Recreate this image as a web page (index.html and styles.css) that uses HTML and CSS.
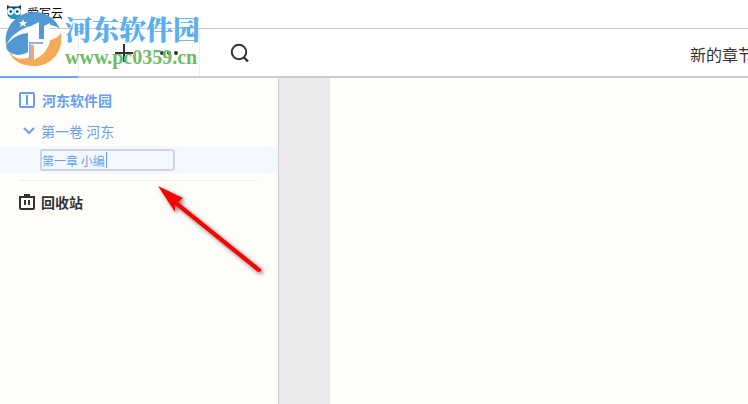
FILE: index.html
```html
<!DOCTYPE html>
<html lang="zh-CN">
<head>
<meta charset="utf-8">
<title>爱写云</title>
<link rel="stylesheet" href="styles.css">
</head>
<body>
<div class="app">
  <header class="titlebar">
    <svg class="owl" viewBox="0 0 16 16" aria-hidden="true">
      <path d="M1 1 4 2.500h8L15 1v6c0 5-3 8-7 8S1 12 1 7z" fill="#123f52"/>
      <path d="M2 4c2-1 4 0 6 1 2-1 4-2 6-1v5c0 3-3 6-6 6s-6-3-6-6z" fill="#199bc2"/>
      <circle cx="4.500" cy="7.500" r="3.400" fill="#e8fbff"/><circle cx="11.500" cy="7.500" r="3.400" fill="#e8fbff"/>
      <circle cx="4.800" cy="7.500" r="1.300" fill="#123f52"/><circle cx="11.200" cy="7.500" r="1.300" fill="#123f52"/>
    </svg>
    <span>爱写云</span>
  </header>
  <div class="toolbar">
    <div class="tab">
      <button class="tool" aria-label="目录"><svg width="12" height="20" viewBox="0 0 12 20"><path d="M3 1v18M3 4h8M3 16h8" fill="none" stroke="#6a9ff0" stroke-width="2"/></svg></button>
    </div>
    <div class="actions">
      <button class="tool" aria-label="新建"><svg width="18" height="18" viewBox="0 0 18 18"><path d="M9 0v18M0 9h18" stroke="#333" stroke-width="2"/></svg></button>
      <button class="tool" aria-label="更多"><svg width="18" height="18" viewBox="0 0 18 18" fill="#333"><circle cx="2" cy="9" r="2"/><circle cx="9" cy="9" r="2"/><circle cx="16" cy="9" r="2"/></svg></button>
    </div>
    <button class="tool search" aria-label="搜索"><svg width="20" height="20" viewBox="0 0 20 20"><circle cx="9" cy="9" r="7.200" fill="none" stroke="#333" stroke-width="2"/><path d="m13.500 14 4.500 4.500" stroke="#333" stroke-width="2.400"/></svg></button>
    <h1 class="chapter">新的章节</h1>
  </div>
  <div class="workspace">
    <nav class="sidebar">
      <a class="row book" href="#book"><svg width="16" height="16" viewBox="0 0 16 16"><rect x="1" y="1" width="14" height="14" rx="1" fill="none" stroke="#6a9ff0" stroke-width="2"/><path d="M8 3v10" stroke="#6a9ff0" stroke-width="2"/></svg><span>河东软件园</span></a>
      <a class="row volume" href="#volume"><svg width="12" height="8" viewBox="0 0 12 8"><path d="m1 1 5 5 5-5" fill="none" stroke="#6a9ff0" stroke-width="2"/></svg><span>第一卷 河东</span></a>
      <div class="row edit">
        <input class="name" type="text" aria-label="章节名称" value="第一章 小编">
        <span class="caret"></span>
      </div>
      <hr class="rule">
      <a class="row trash" href="#trash"><svg width="16" height="16" viewBox="0 0 16 16"><path d="M0 3h16M5 1h6M1 3v11q0 1 1 1h12q1 0 1-1V3M6 6v5M10 6v5" fill="none" stroke="#333" stroke-width="2"/></svg><span>回收站</span></a>
    </nav>
    <div class="gutter"></div>
    <main class="page"></main>
  </div>
  <div class="watermark">
    <svg class="mark" width="58" height="56" viewBox="0 0 58 56" aria-hidden="true">
      <path d="M3 39C-3 18 12 1 30 1c12 0 22 7 26 17-4-3-7-4-10-4v15H24v13C16 46 8 44 3 39z" fill="#5299d3"/>
      <path d="M57 22c3 18-9 33-27 33-12 0-21-5-25-14 7 6 15 6 21 3V29h20c5-1 9-4 11-7z" fill="#f7aa55"/>
      <path d="M1 36c6-12 15-18 26-21l8-4v17h5V15l6-3v17c-1 9-8 16-16 20V34h-4v12c-7 3-15 2-19-3 7 2 12 1 17-2V22C14 23 7 27 1 36z" fill="#fff"/>
      <path d="M26 31v16M27 32h12" fill="none" stroke="#8fb2df" stroke-width="2"/>
      <path d="m19 8 1 3h3l-2 2 1 3-3-2-3 2 1-3-2-2h3z" fill="#fff"/>
    </svg>
    <div class="brand"><span class="site">河东软件园</span><span class="url">www.pc0359.cn</span></div>
  </div>
  <svg class="arrow" width="120" height="100" viewBox="0 0 120 100" aria-hidden="true">
    <path d="m7 7 25 12-5 4 83 67q1 3-3 3L24 26v7z" fill="#f00"/>
  </svg>
</div>
</body>
</html>
```
FILE: styles.css
```css
* { box-sizing: border-box; }
body {
  margin: 0;
  font-family: "Noto Sans CJK SC", sans-serif;
  font-size: 14px;
  color: #333;
  background: #fff;
}
.app { position: relative; display: flex; flex-direction: column; min-height: 100vh; overflow: hidden; }
.titlebar {
  display: flex;
  align-items: center;
  gap: 5px;
  height: 29px;
  padding: 0 6px 4px;
  border-bottom: 1px solid #ccc;
  font-size: 12px;
  color: #000;
}
.owl { width: 16px; height: 16px; }
.toolbar { display: flex; height: 49px; border-bottom: 2px solid #ccc; }
.tab {
  display: flex;
  width: 79px;
  margin-bottom: -2px;
  padding-left: 28px;
  border-right: 1px solid #eee;
  border-bottom: 2px solid #6ea3f4;
}
.actions { display: flex; gap: 27px; width: 121px; padding-left: 36px; border-right: 1px solid #eee; }
.tool { display: flex; align-items: center; padding: 0; border: 0; background: none; }
.search { margin-left: 30px; }
.chapter { flex: 1; margin: 0 -6px 0 0; font-size: 16px; font-weight: 400; line-height: 50px; text-align: right; white-space: nowrap; }
.workspace { display: flex; flex: 1; }
.sidebar { width: 279px; padding-top: 7px; border-right: 1px solid #ccc; background: #fefdf9; }
.gutter { width: 51px; background: #ebe9eb; }
.page { flex: 1; background: #fffefa; }
.row { display: flex; align-items: center; height: 30px; color: #6a9ff0; text-decoration: none; }
.book { gap: 7px; padding-left: 19px; font-weight: 700; }
.volume { gap: 6px; padding-left: 23px; height: 32px; }
.edit { position: relative; height: 26px; padding-left: 40px; background: #f3f8ff; }
.name {
  width: 135px;
  height: 22px;
  padding: 0;
  border: 2px solid #cbd5e6;
  border-radius: 3px;
  outline: 0;
  background: #f3f8ff;
  font: inherit;
  font-size: 12px;
  color: #6a9ff0;
}
.caret { position: absolute; left: 106px; top: 5px; width: 1px; height: 16px; background: #6a9ff0; }
.rule { height: 1px; margin: 7px 20px 6px 19px; border: 0; background: #eee; }
.trash { gap: 6px; padding-left: 19px; font-weight: 700; color: #333; }
.watermark { position: absolute; top: 11px; left: 4px; display: flex; gap: 3px; pointer-events: none; }
.brand { display: flex; flex-direction: column; }
.site { font-family: "Noto Serif CJK SC", "Noto Sans CJK SC", sans-serif; font-size: 27px; font-weight: 900; line-height: 36px; color: #5aaff0; }
.url { font-family: "Liberation Serif", serif; font-size: 20px; font-weight: 700; line-height: 20px; color: #6fbb64; }
.arrow { position: absolute; top: 179px; left: 151px; filter: drop-shadow(2px 2px 2px #0008); pointer-events: none; }
```
